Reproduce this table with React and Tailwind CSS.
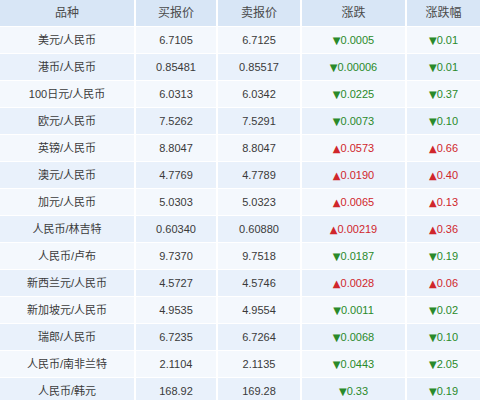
import React from 'react';

const rows = [
  ['美元/人民币', '6.7105', '6.7125', 'down', '0.0005', '0.01'],
  ['港币/人民币', '0.85481', '0.85517', 'down', '0.00006', '0.01'],
  ['100日元/人民币', '6.0313', '6.0342', 'down', '0.0225', '0.37'],
  ['欧元/人民币', '7.5262', '7.5291', 'down', '0.0073', '0.10'],
  ['英镑/人民币', '8.8047', '8.8047', 'up', '0.0573', '0.66'],
  ['澳元/人民币', '4.7769', '4.7789', 'up', '0.0190', '0.40'],
  ['加元/人民币', '5.0303', '5.0323', 'up', '0.0065', '0.13'],
  ['人民币/林吉特', '0.60340', '0.60880', 'up', '0.00219', '0.36'],
  ['人民币/卢布', '9.7370', '9.7518', 'down', '0.0187', '0.19'],
  ['新西兰元/人民币', '4.5727', '4.5746', 'up', '0.0028', '0.06'],
  ['新加坡元/人民币', '4.9535', '4.9554', 'down', '0.0011', '0.02'],
  ['瑞郎/人民币', '6.7235', '6.7264', 'down', '0.0068', '0.10'],
  ['人民币/南非兰特', '2.1104', '2.1135', 'down', '0.0443', '2.05'],
  ['人民币/韩元', '168.92', '169.28', 'down', '0.33', '0.19'],
];

function Change({ dir, value }) {
  const up = dir === 'up';
  return (
    <span className={up ? 'text-[#d0262b]' : 'text-[#2a8a2a]'}>
      <span className="text-[10px] font-['DejaVu_Sans',sans-serif]">{up ? '▲' : '▼'}</span>
      {value}
    </span>
  );
}

export default function App() {
  const cols = 'grid grid-cols-[136px_82px_84px_105px_73px]';
  const cell = 'flex items-center justify-center border-r-2 border-white last:border-r-0';
  return (
    <div className="w-[480px] h-[400px] overflow-hidden bg-white text-[11px] text-[#3a3a3a] font-['Liberation_Sans','Noto_Sans_CJK_SC',sans-serif]">
      <div className={`${cols} h-[26px] bg-[#d8e6f6] text-[12px] text-[#4a4a4a]`}>
        <div className={cell}>品种</div>
        <div className={cell}>买报价</div>
        <div className={cell}>卖报价</div>
        <div className={cell}>涨跌</div>
        <div className={cell}>涨跌幅</div>
      </div>
      {rows.map((r, i) => (
        <div
          key={r[0]}
          className={`${cols} h-[27px] border-t border-white ${i % 2 ? 'bg-[#e9f1fb]' : 'bg-[#f4f8fd]'}`}
        >
          <div className={cell}>{r[0]}</div>
          <div className={cell}>{r[1]}</div>
          <div className={cell}>{r[2]}</div>
          <div className={cell}><Change dir={r[3]} value={r[4]} /></div>
          <div className={cell}><Change dir={r[3]} value={r[5]} /></div>
        </div>
      ))}
    </div>
  );
}
